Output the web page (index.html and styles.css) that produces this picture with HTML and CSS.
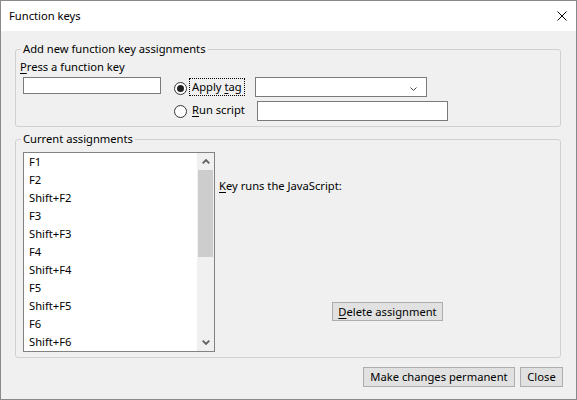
FILE: index.html
```html
<!DOCTYPE html>
<html>
<head>
<meta charset="utf-8">
<title>Function keys</title>
<link rel="stylesheet" href="styles.css">
</head>
<body>
<div class="window">
  <div class="titlebar">
    <span class="title">Function keys</span>
    <svg class="close" width="10" height="10" viewBox="0 0 10 10"><path d="M0.5 0.5 L9.5 9.5 M9.5 0.5 L0.5 9.5" stroke="#000" stroke-width="1" fill="none"/></svg>
  </div>
  <div class="client">
    <fieldset class="group g1">
      <legend>Add new function key assignments</legend>
      <div class="g1grid">
        <div class="presslabel"><u>P</u>ress a function key</div>
        <div class="spacer"></div>
        <div class="spacer"></div>
        <div class="textbox keyinput"></div>
        <div class="radiocell"><span class="radio checked r1"><span class="dot"></span></span><span class="rlabel focus"><span>Apply </span><u>t</u><span>ag</span></span></div>
        <div class="combo"><svg class="chev" width="7" height="4" viewBox="0 0 7 4"><path d="M0.5 0.5 L3.5 3.5 L6.5 0.5" stroke="#444" stroke-width="1" fill="none"/></svg></div>
        <div class="spacer"></div>
        <div class="radiocell"><span class="radio r2"></span><span class="rlabel"><u>R</u>un script</span></div>
        <div class="textbox scriptinput"></div>
      </div>
    </fieldset>
    <fieldset class="group g2">
      <legend>Current assignments</legend>
      <div class="g2body">
        <div class="listbox">
          <ul class="items">
            <li>F1</li>
            <li>F2</li>
            <li>Shift+F2</li>
            <li>F3</li>
            <li>Shift+F3</li>
            <li>F4</li>
            <li>Shift+F4</li>
            <li>F5</li>
            <li>Shift+F5</li>
            <li>F6</li>
            <li>Shift+F6</li>
          </ul>
          <div class="vscroll">
            <div class="sbtn"><svg width="8" height="5" viewBox="0 0 8 5"><path d="M0.7 4.3 L4 1 L7.3 4.3" stroke="#606060" stroke-width="1.8" fill="none"/></svg></div>
            <div class="track"><div class="thumb"></div></div>
            <div class="sbtn"><svg width="8" height="5" viewBox="0 0 8 5"><path d="M0.7 0.7 L4 4 L7.3 0.7" stroke="#606060" stroke-width="1.8" fill="none"/></svg></div>
          </div>
        </div>
        <div class="detail">
          <div class="keylabel"><u>K</u>ey runs the JavaScript:</div>
          <button class="btn delete"><u>D</u>elete assignment</button>
        </div>
      </div>
    </fieldset>
    <div class="footer">
      <button class="btn permanent">Make changes permanent</button>
      <button class="btn closebtn">Close</button>
    </div>
  </div>
</div>
</body>
</html>
```

FILE: styles.css
```css
* { box-sizing: border-box; }
html, body { margin: 0; padding: 0; }
body {
  width: 577px;
  height: 400px;
  overflow: hidden;
  font-family: "Noto Sans", "Open Sans", sans-serif;
  font-size: 11.2px;
  line-height: 16px;
  color: #000;
  background: #f0f0f0;
}
u { text-decoration: underline; text-underline-offset: 2px; }

.window {
  width: 577px;
  height: 400px;
  border: 1px solid #8a8a8a;
  background: #f0f0f0;
  display: flex;
  flex-direction: column;
}
.titlebar {
  flex: none;
  height: 30px;
  background: #fff;
  display: flex;
  align-items: center;
  justify-content: space-between;
  padding: 0 9px 0 8px;
}
.close { display: block; margin-top: -1px; }

.client {
  flex: 1;
  padding: 10px 13px 0 14px;
  display: flex;
  flex-direction: column;
}

.group {
  margin: 0 2px 0 0;
  min-width: 0;
  border: 1px solid #d0d0d0;
  border-radius: 3px;
}
.group legend {
  padding: 0 2px;
  line-height: 16px;
}
.g1 { padding: 2px 4px 5px 5px; }
.g2 { padding: 5px 4px 5px 5px; margin-top: 4px; }

.g1grid {
  display: grid;
  grid-template-columns: 153px 81px 1fr;
  grid-template-rows: 18px 24px 20px;
  align-items: start;
}
.presslabel { margin-left: -1px; white-space: nowrap; }
.textbox {
  background: #fff;
  border: 1px solid #7a7a7a;
}
.keyinput { margin-left: 2px; width: 138px; height: 17px; }
.scriptinput { margin-left: 2px; width: 191px; height: 20px; }
.combo {
  width: 172px;
  height: 20px;
  background: #fff;
  border: 1px solid #7a7a7a;
  display: flex;
  justify-content: flex-end;
  align-items: center;
  padding-right: 9px;
}
.chev { display: block; margin-top: 4px; }

.radiocell { display: flex; align-items: flex-start; }
.radio {
  flex: none;
  width: 13px;
  height: 13px;
  border: 1px solid #333;
  border-radius: 50%;
  background: #fff;
  display: flex;
  align-items: center;
  justify-content: center;
}
.radio.r1 { margin-top: 5px; }
.radio.r2 { margin-top: 4px; }
.radio .dot {
  width: 7px;
  height: 7px;
  border-radius: 50%;
  background: #222;
}
.rlabel {
  margin-left: 2px;
  padding: 0 2px;
  border: 1px solid transparent;
  white-space: nowrap;
}
.rlabel.focus { border: 1px dotted #000; margin-top: 1px; }

.g2body { display: flex; align-items: flex-start; }
.listbox {
  flex: none;
  margin-left: 2px;
  width: 192px;
  height: 200px;
  border: 1px solid #828282;
  background: #fff;
  display: flex;
}
.items {
  flex: 1;
  list-style: none;
  margin: 0;
  padding: 0 0 0 5px;
  overflow: hidden;
}
.items li { line-height: 18px; height: 18px; white-space: nowrap; }
.vscroll {
  flex: none;
  width: 17px;
  background: #f0f0f0;
  display: flex;
  flex-direction: column;
}
.sbtn {
  flex: none;
  height: 17px;
  display: flex;
  align-items: center;
  justify-content: center;
}
.sbtn svg { display: block; }
.track { flex: 1; }
.thumb { height: 87px; margin: 0 1px; background: #cdcdcd; }

.detail {
  flex: 1;
  padding-left: 4px;
  display: flex;
  flex-direction: column;
  align-items: flex-start;
}
.keylabel { margin-top: 26px; }

.btn {
  font: inherit;
  line-height: 16px;
  color: #000;
  background: #e1e1e1;
  border: 1px solid #adadad;
  border-radius: 0;
  padding: 0;
  margin: 0;
  text-align: center;
}
.delete { align-self: center; width: 111px; height: 19px; margin-top: 108px; }

.footer {
  display: flex;
  justify-content: flex-end;
  gap: 5px;
  margin-top: 9px;
}
.permanent { width: 152px; height: 20px; }
.closebtn { width: 43px; height: 20px; }
```
